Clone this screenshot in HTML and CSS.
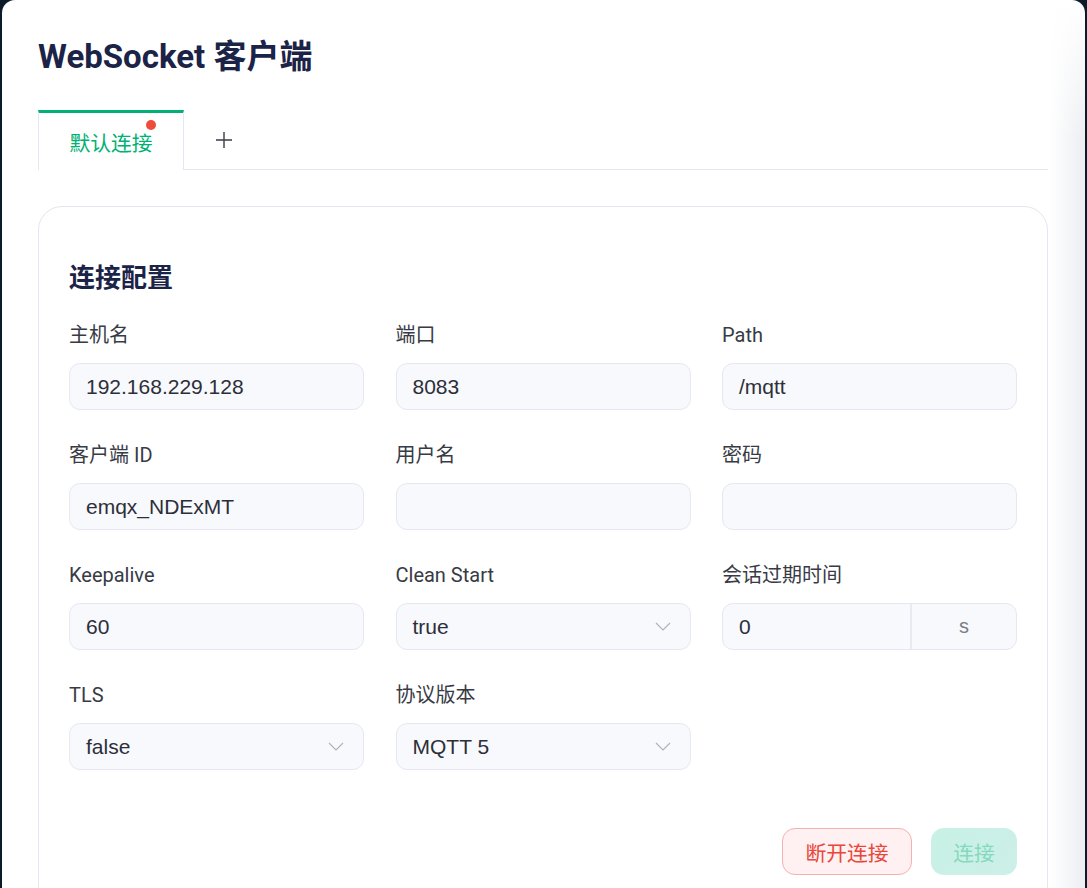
FILE: index.html
```html
<!DOCTYPE html>
<html lang="zh-CN">
<head>
<meta charset="utf-8">
<title>WebSocket 客户端</title>
<link rel="stylesheet" href="styles.css">
</head>
<body>
<div class="panel">
  <h1 class="title">WebSocket 客户端</h1>
  <div class="tabs">
    <div class="tab active">默认连接<span class="dot"></span></div>
    <div class="tab-add">
      <svg width="18" height="18" viewBox="0 0 18 18"><path d="M9 1v16M1 9h16" stroke="#3a3d47" stroke-width="1.4" fill="none"/></svg>
    </div>
  </div>
  <section class="card">
    <h2 class="card-title">连接配置</h2>
    <div class="grid">
      <div class="field"><label>主机名</label><div class="input">192.168.229.128</div></div>
      <div class="field"><label>端口</label><div class="input">8083</div></div>
      <div class="field"><label>Path</label><div class="input">/mqtt</div></div>

      <div class="field"><label>客户端 ID</label><div class="input">emqx_NDExMT</div></div>
      <div class="field"><label>用户名</label><div class="input"></div></div>
      <div class="field"><label>密码</label><div class="input"></div></div>

      <div class="field"><label>Keepalive</label><div class="input">60</div></div>
      <div class="field"><label>Clean Start</label>
        <div class="input select">true<svg class="chev" width="16" height="9" viewBox="0 0 16 9"><path d="M1 1l7 7 7-7" stroke="#aeb1bc" stroke-width="1.1" fill="none"/></svg></div>
      </div>
      <div class="field"><label>会话过期时间</label>
        <div class="input group"><span class="group-main">0</span><span class="addon">s</span></div>
      </div>

      <div class="field"><label>TLS</label>
        <div class="input select">false<svg class="chev" width="16" height="9" viewBox="0 0 16 9"><path d="M1 1l7 7 7-7" stroke="#aeb1bc" stroke-width="1.1" fill="none"/></svg></div>
      </div>
      <div class="field"><label>协议版本</label>
        <div class="input select">MQTT 5<svg class="chev" width="16" height="9" viewBox="0 0 16 9"><path d="M1 1l7 7 7-7" stroke="#aeb1bc" stroke-width="1.1" fill="none"/></svg></div>
      </div>
    </div>
    <div class="actions">
      <button class="btn btn-danger">断开连接</button>
      <button class="btn btn-primary">连接</button>
    </div>
  </section>
</div>
</body>
</html>
```
FILE: styles.css
```css
html, body {
  margin: 0;
  padding: 0;
  height: 888px;
  overflow: hidden;
}
body {
  background: #0c1b29;
  font-family: Roboto, "Noto Sans CJK SC", sans-serif;
  color: #33363f;
}
.panel {
  margin: 0 2px 0 2px;
  width: 1083px;
  min-height: 1200px;
  box-sizing: border-box;
  border-radius: 13px 13px 0 0;
  background:
    linear-gradient(to bottom, #ffffff 0, rgba(255,255,255,0) 140px),
    linear-gradient(to right, #ffffff 1048px, #eceef2 100%);
  padding: 38px 0 0 36px;
}
.title {
  margin: 0;
  font-size: 33px;
  line-height: 38px;
  font-weight: 700;
  color: #1b2347;
  letter-spacing: 0;
}
.tabs {
  margin-top: 34px;
  width: 1010px;
  display: flex;
  align-items: stretch;
  border-bottom: 1px solid #e5e6ef;
}
.tab {
  position: relative;
  width: 144px;
  height: 56px;
  border-top: 3px solid #00b173;
  border-left: 1px solid #e5e6ef;
  border-right: 1px solid #e5e6ef;
  margin-bottom: -1px;
  background: #fff;
  display: flex;
  align-items: center;
  justify-content: center;
  font-size: 20.8px;
  color: #00b173;
  padding-top: 1px;
  box-sizing: content-box;
}
.dot {
  position: absolute;
  width: 10px;
  height: 10px;
  border-radius: 50%;
  background: #ee4b3b;
  right: 27px;
  top: 7px;
}
.tab-add {
  width: 80px;
  display: flex;
  align-items: center;
  justify-content: center;
}
.card {
  margin-top: 36px;
  width: 1010px;
  box-sizing: border-box;
  border: 1px solid #e4e6f0;
  border-radius: 24px;
  padding: 53px 30px 60px 30px;
  min-height: 800px;
  background: #fff;
}
.card-title {
  margin: 0;
  font-size: 26px;
  line-height: 36px;
  font-weight: 700;
  color: #1b2347;
}
.grid {
  margin-top: 25px;
  display: grid;
  grid-template-columns: 1fr 1fr 1fr;
  column-gap: 31.5px;
  row-gap: 31px;
}
.field {
  display: flex;
  flex-direction: column;
}
.field label {
  font-size: 20px;
  line-height: 28px;
  color: #383b45;
  margin-bottom: 14px;
}
.input {
  height: 47px;
  box-sizing: border-box;
  border: 1px solid #e6e8f1;
  border-radius: 11px;
  background: #f8f9fc;
  display: flex;
  align-items: center;
  padding: 0 16px;
  font-family: "Liberation Sans", Arial, sans-serif;
  font-size: 21px;
  color: #2c2f3a;
}
.select {
  justify-content: space-between;
  padding-right: 19px;
}
.chev {
  display: block;
}
.group {
  padding: 0;
}
.group-main {
  flex: 1;
  padding-left: 16px;
  align-self: stretch;
  display: flex;
  align-items: center;
  border-right: 2px solid #e8eaf1;
}
.addon {
  width: 104px;
  text-align: center;
  color: #7b7e89;
  font-size: 20px;
}
.actions {
  margin-top: 58px;
  display: flex;
  justify-content: flex-end;
  gap: 19px;
}
.btn {
  height: 47px;
  box-sizing: border-box;
  border-radius: 13px;
  font-family: Roboto, "Noto Sans CJK SC", sans-serif;
  font-size: 20.8px;
  padding: 0 22px;
  cursor: pointer;
}
.btn-danger {
  width: 130px;
  background: #fff0f1;
  border: 1px solid #f7b0b0;
  color: #e8473b;
}
.btn-primary {
  width: 86px;
  border: none;
  background: linear-gradient(135deg, #c8f1e5, #cdefe9);
  color: #85d9bc;
}
```
